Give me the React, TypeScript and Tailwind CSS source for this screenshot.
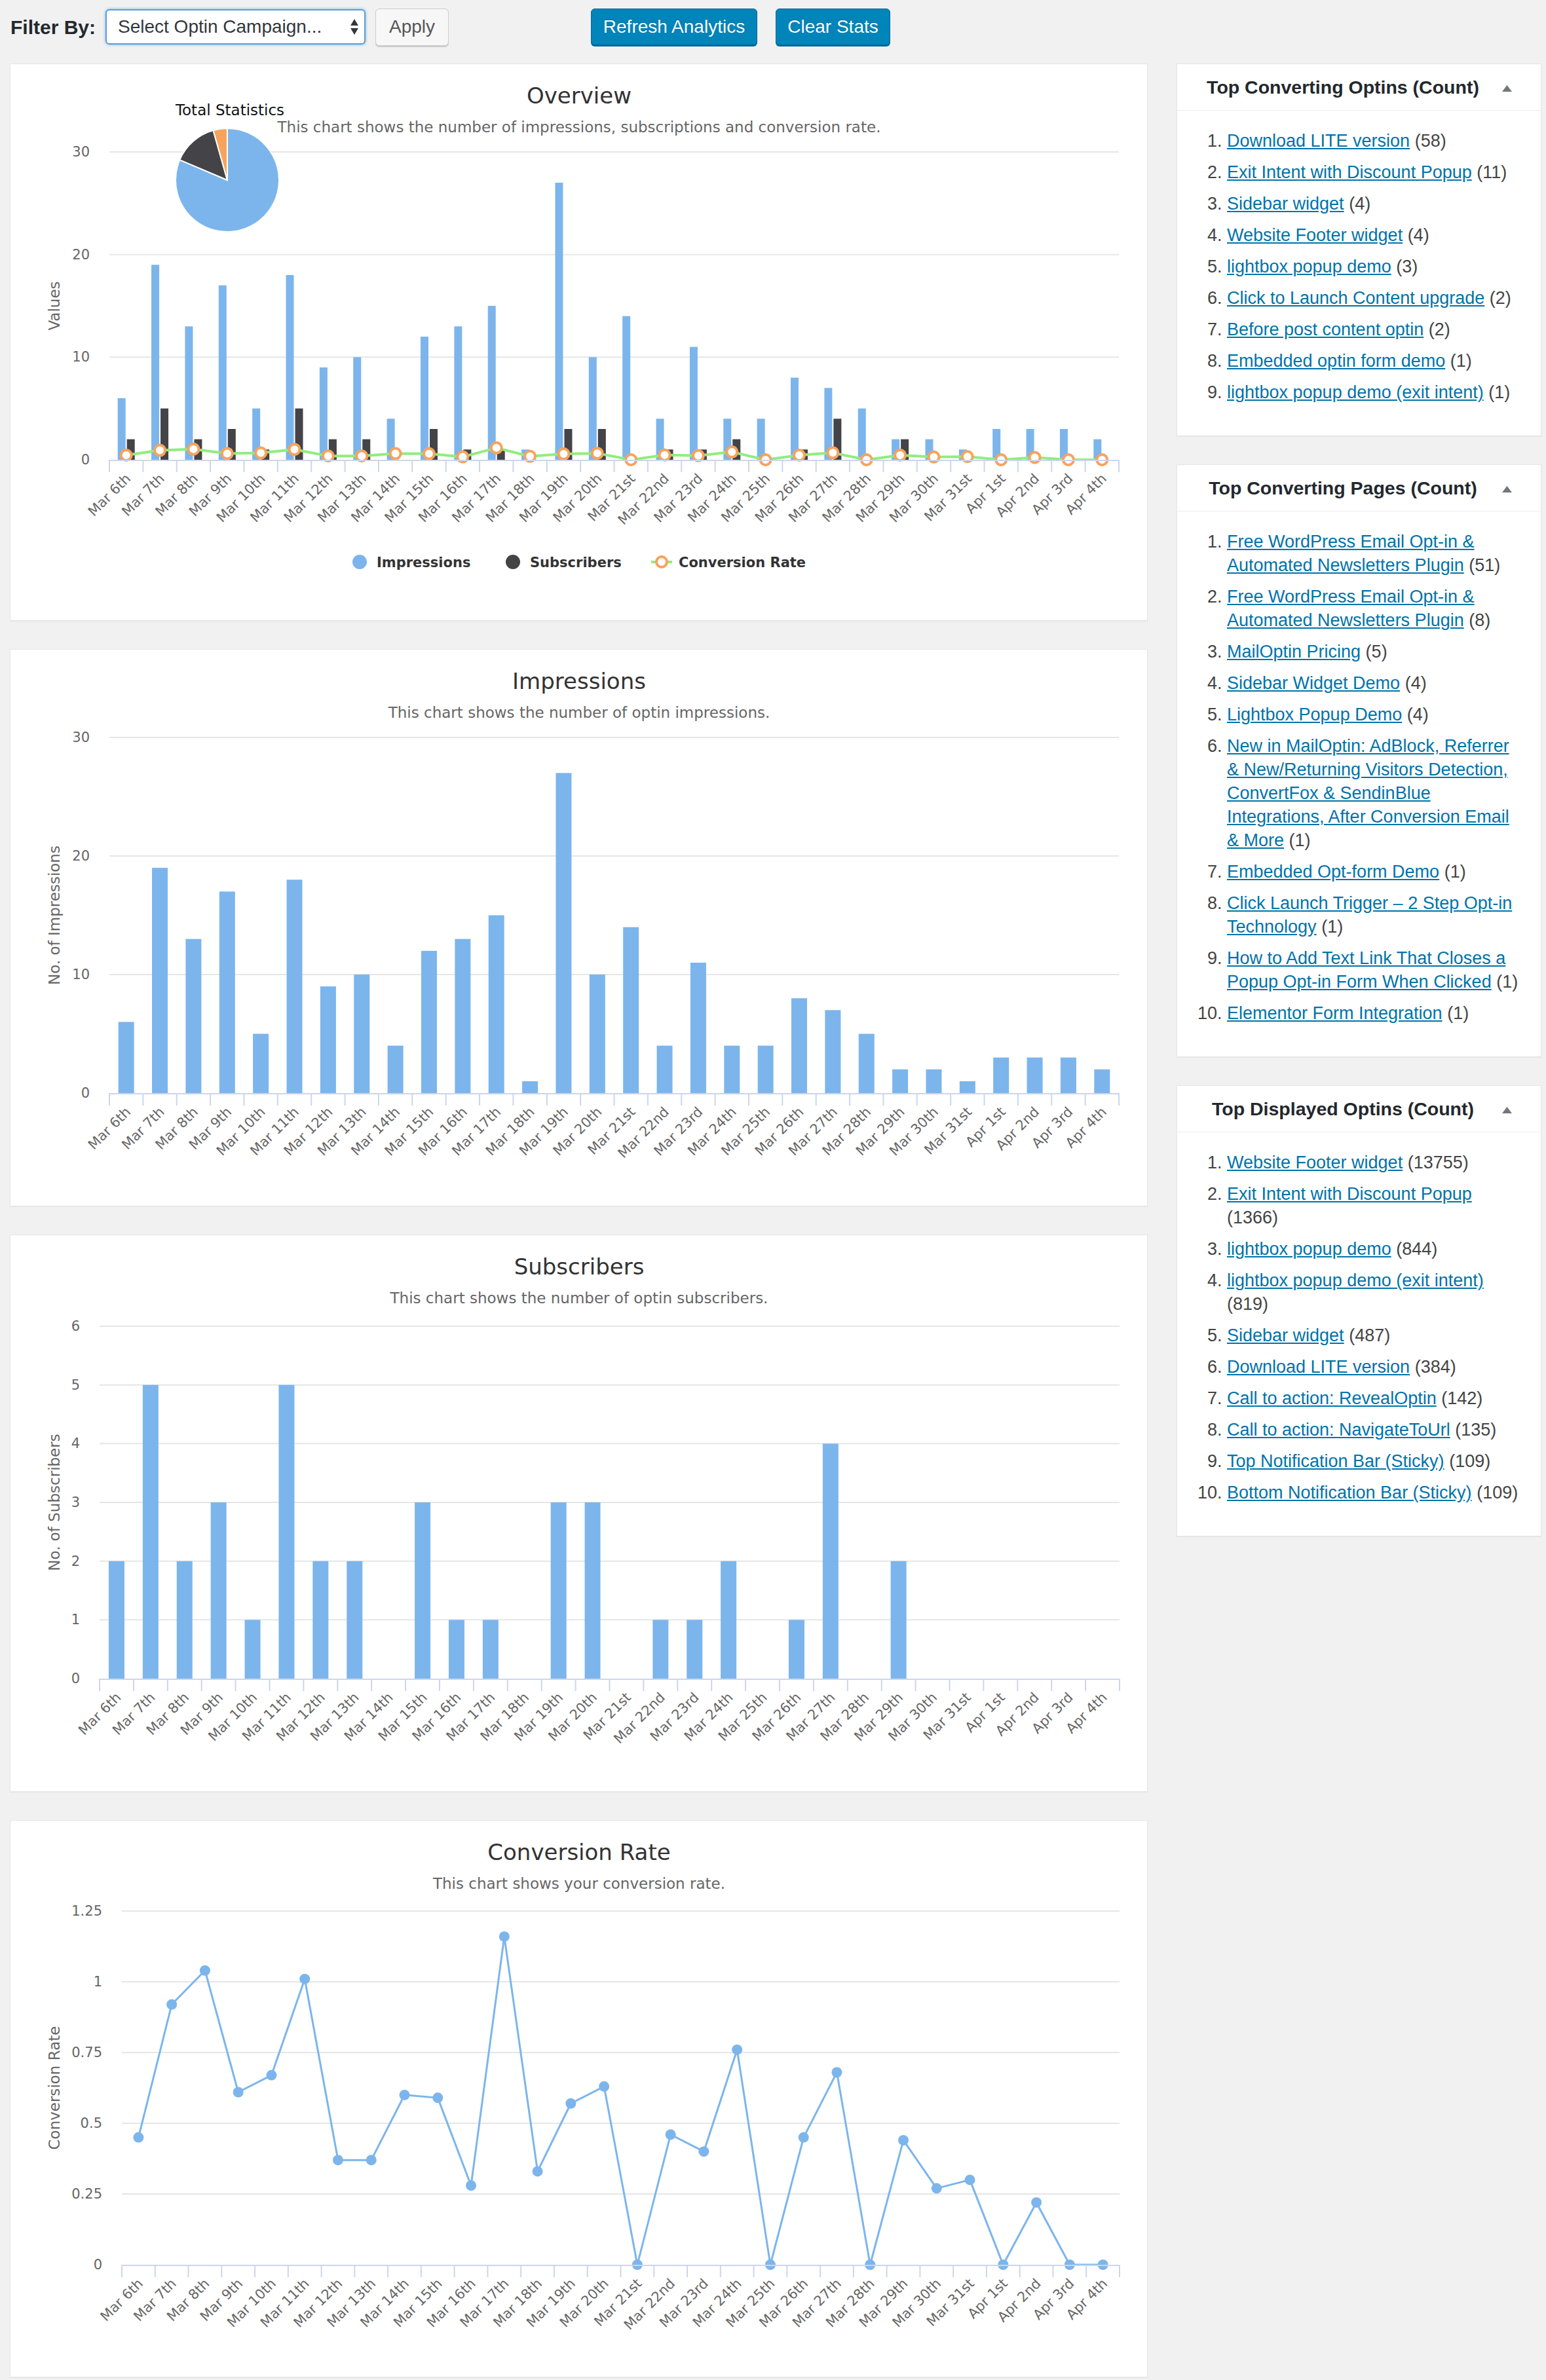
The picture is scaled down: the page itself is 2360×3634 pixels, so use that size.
import React from "react";

const CATS = [
  "Mar 6th", "Mar 7th", "Mar 8th", "Mar 9th", "Mar 10th", "Mar 11th", "Mar 12th", "Mar 13th",
  "Mar 14th", "Mar 15th", "Mar 16th", "Mar 17th", "Mar 18th", "Mar 19th", "Mar 20th", "Mar 21st",
  "Mar 22nd", "Mar 23rd", "Mar 24th", "Mar 25th", "Mar 26th", "Mar 27th", "Mar 28th", "Mar 29th",
  "Mar 30th", "Mar 31st", "Apr 1st", "Apr 2nd", "Apr 3rd", "Apr 4th",
];
const IMPRESSIONS = [6, 19, 13, 17, 5, 18, 9, 10, 4, 12, 13, 15, 1, 27, 10, 14, 4, 11, 4, 4, 8, 7, 5, 2, 2, 1, 3, 3, 3, 2];
const SUBSCRIBERS = [2, 5, 2, 3, 1, 5, 2, 2, 0, 3, 1, 1, 0, 3, 3, 0, 1, 1, 2, 0, 1, 4, 0, 2, 0, 0, 0, 0, 0, 0];
const CONVERSION = [
  0.45, 0.92, 1.04, 0.61, 0.67, 1.01, 0.37, 0.37, 0.6, 0.59, 0.28, 1.16, 0.33, 0.57, 0.63, 0,
  0.46, 0.4, 0.76, 0, 0.45, 0.68, 0, 0.44, 0.27, 0.3, 0, 0.22, 0, 0,
];

const BLUE = "#7cb5ec";
const DARK = "#434348";
const GREEN = "#90ed7d";
const ORANGE = "#f7a35c";

type Plot = {
  x0: number;
  x1: number;
  yTop: number;
  yBase: number;
  max: number;
  ticks: number[];
  fmt: (v: number) => string;
};

const colX = (p: Plot, i: number) => p.x0 + ((p.x1 - p.x0) / CATS.length) * (i + 0.5);
const valY = (p: Plot, v: number) => p.yBase - (v / p.max) * (p.yBase - p.yTop);

function Grid({ p, yTitle }: { p: Plot; yTitle: string }) {
  const mid = (p.yTop + p.yBase) / 2;
  return (
    <g>
      {p.ticks.map((v) => (
        <g key={v}>
          {v > 0 && (
            <line x1={p.x0} x2={p.x1} y1={valY(p, v)} y2={valY(p, v)} stroke="#e6e6e6" strokeWidth={2} />
          )}
          <text x={p.x0 - 30} y={valY(p, v) + 7} textAnchor="end" fontSize={21} fill="#666">
            {p.fmt(v)}
          </text>
        </g>
      ))}
      <text transform={`translate(75 ${mid}) rotate(-90)`} textAnchor="middle" fontSize={23} fill="#666">
        {yTitle}
      </text>
    </g>
  );
}

function XAxis({ p }: { p: Plot }) {
  const step = (p.x1 - p.x0) / CATS.length;
  return (
    <g>
      <line x1={p.x0} x2={p.x1} y1={p.yBase + 1} y2={p.yBase + 1} stroke="#ccd6eb" strokeWidth={2} />
      {Array.from({ length: CATS.length + 1 }).map((_, i) => (
        <line
          key={i}
          x1={p.x0 + i * step}
          x2={p.x0 + i * step}
          y1={p.yBase}
          y2={p.yBase + 19}
          stroke="#ccd6eb"
          strokeWidth={2}
        />
      ))}
      {CATS.map((c, i) => {
        const x = colX(p, i) + 8;
        const y = p.yBase + 30;
        return (
          <text key={c} x={x} y={y} transform={`rotate(-45 ${x} ${y})`} textAnchor="end" fontSize={21} fill="#666">
            {c}
          </text>
        );
      })}
    </g>
  );
}

function ChartPanel({ title, subtitle, children }: { title: string; subtitle: string; children: React.ReactNode }) {
  return (
    <div className="h-[851px] w-[1737px] border border-[#e5e5e5] bg-white shadow-[0_1px_1px_rgba(0,0,0,0.04)]">
      <svg className="block" width={1735} height={849} fontFamily="'DejaVu Sans', sans-serif">
        <text x={868} y={60} textAnchor="middle" fontSize={34} fill="#333">
          {title}
        </text>
        <text x={868} y={104} textAnchor="middle" fontSize={23} fill="#666">
          {subtitle}
        </text>
        {children}
      </svg>
    </div>
  );
}

function slice(cx: number, cy: number, r: number, a0: number, a1: number) {
  const pt = (a: number) => {
    const rad = (a * Math.PI) / 180;
    return `${cx + r * Math.sin(rad)} ${cy - r * Math.cos(rad)}`;
  };
  const large = a1 - a0 > 180 ? 1 : 0;
  return `M ${cx} ${cy} L ${pt(a0)} A ${r} ${r} 0 ${large} 1 ${pt(a1)} Z`;
}

function Overview() {
  const p: Plot = { x0: 151, x1: 1692, yTop: 134, yBase: 604, max: 30, ticks: [0, 10, 20, 30], fmt: (v) => `${v}` };
  const totals = [
    IMPRESSIONS.reduce((a, b) => a + b, 0),
    SUBSCRIBERS.reduce((a, b) => a + b, 0),
    CONVERSION.reduce((a, b) => a + b, 0),
  ];
  const sum = totals[0] + totals[1] + totals[2];
  const colors = [BLUE, DARK, ORANGE];
  let acc = 0;
  const line = CONVERSION.map((v, i) => `${colX(p, i)},${valY(p, v)}`).join(" ");
  return (
    <ChartPanel title="Overview" subtitle="This chart shows the number of impressions, subscriptions and conversion rate.">
      <Grid p={p} yTitle="Values" />
      {IMPRESSIONS.map((v, i) => (
        <rect key={`i${i}`} x={colX(p, i) - 13} y={valY(p, v)} width={12} height={p.yBase - valY(p, v)} fill={BLUE} />
      ))}
      {SUBSCRIBERS.map((v, i) => (
        <rect key={`s${i}`} x={colX(p, i) + 1} y={valY(p, v)} width={12} height={p.yBase - valY(p, v)} fill={DARK} />
      ))}
      <polyline points={line} fill="none" stroke={GREEN} strokeWidth={4} strokeLinejoin="round" />
      {CONVERSION.map((v, i) => (
        <circle key={`c${i}`} cx={colX(p, i)} cy={valY(p, v)} r={8} fill="#fff" stroke={ORANGE} strokeWidth={4} />
      ))}
      <XAxis p={p} />

      {/* pie */}
      <text x={335} y={78} textAnchor="middle" fontSize={23} fill="#111">
        Total Statistics
      </text>
      {totals.map((t, k) => {
        const a0 = (acc / sum) * 360;
        acc += t;
        const a1 = (acc / sum) * 360;
        return <path key={k} d={slice(331, 177, 79, a0, a1)} fill={colors[k]} stroke="#fff" strokeWidth={2} />;
      })}

      {/* legend */}
      <circle cx={533} cy={760} r={11} fill={BLUE} />
      <text x={559} y={768} fontSize={21} fontWeight="bold" fill="#333">
        Impressions
      </text>
      <circle cx={767} cy={760} r={11} fill={DARK} />
      <text x={793} y={768} fontSize={21} fontWeight="bold" fill="#333">
        Subscribers
      </text>
      <line x1={978} x2={1010} y1={760} y2={760} stroke={GREEN} strokeWidth={4} />
      <circle cx={994} cy={760} r={8} fill="#fff" stroke={ORANGE} strokeWidth={4} />
      <text x={1020} y={768} fontSize={21} fontWeight="bold" fill="#333">
        Conversion Rate
      </text>
    </ChartPanel>
  );
}

function BarChart({
  title,
  subtitle,
  yTitle,
  data,
  p,
}: {
  title: string;
  subtitle: string;
  yTitle: string;
  data: number[];
  p: Plot;
}) {
  return (
    <ChartPanel title={title} subtitle={subtitle}>
      <Grid p={p} yTitle={yTitle} />
      {data.map((v, i) => (
        <rect key={i} x={colX(p, i) - 12} y={valY(p, v)} width={24} height={p.yBase - valY(p, v)} fill={BLUE} />
      ))}
      <XAxis p={p} />
    </ChartPanel>
  );
}

function ConversionChart() {
  const p: Plot = {
    x0: 170,
    x1: 1693,
    yTop: 138,
    yBase: 678,
    max: 1.25,
    ticks: [0, 0.25, 0.5, 0.75, 1, 1.25],
    fmt: (v) => `${v}`,
  };
  const line = CONVERSION.map((v, i) => `${colX(p, i)},${valY(p, v)}`).join(" ");
  return (
    <ChartPanel title="Conversion Rate" subtitle="This chart shows your conversion rate.">
      <Grid p={p} yTitle="Conversion Rate" />
      <polyline points={line} fill="none" stroke={BLUE} strokeWidth={3} strokeLinejoin="round" />
      {CONVERSION.map((v, i) => (
        <circle key={i} cx={colX(p, i)} cy={valY(p, v)} r={8} fill={BLUE} />
      ))}
      <XAxis p={p} />
    </ChartPanel>
  );
}

type Item = { label: string; count: string };

function Widget({ title, items }: { title: string; items: Item[] }) {
  return (
    <div className="border border-[#e5e5e5] bg-white shadow-[0_1px_1px_rgba(0,0,0,0.04)]">
      <div className="relative flex h-[71px] items-center border-b border-[#eeeeee]">
        <h2 className="flex-1 pr-[49px] text-center text-[28.5px] font-bold text-[#23282d]">{title}</h2>
        <span className="absolute right-[44px] top-[32px] block">
          <svg width="15" height="10" className="block">
            <path d="M0 10 L7.5 0 L15 10 Z" fill="#72777c" />
          </svg>
        </span>
      </div>
      <ol className="ml-[24px] mr-[29px] list-decimal pb-[36px] pl-[52px] pt-[28px] text-[27px] leading-[36px] text-[#444]">
        {items.map((it, i) => (
          <li key={i} className="mb-[12px]">
            <a href="#" className="text-[#0073aa] underline">
              {it.label}
            </a>{" "}
            ({it.count})
          </li>
        ))}
      </ol>
    </div>
  );
}

const TOP_OPTINS: Item[] = [
  { label: "Download LITE version", count: "58" },
  { label: "Exit Intent with Discount Popup", count: "11" },
  { label: "Sidebar widget", count: "4" },
  { label: "Website Footer widget", count: "4" },
  { label: "lightbox popup demo", count: "3" },
  { label: "Click to Launch Content upgrade", count: "2" },
  { label: "Before post content optin", count: "2" },
  { label: "Embedded optin form demo", count: "1" },
  { label: "lightbox popup demo (exit intent)", count: "1" },
];

const TOP_PAGES: Item[] = [
  { label: "Free WordPress Email Opt-in & Automated Newsletters Plugin", count: "51" },
  { label: "Free WordPress Email Opt-in & Automated Newsletters Plugin", count: "8" },
  { label: "MailOptin Pricing", count: "5" },
  { label: "Sidebar Widget Demo", count: "4" },
  { label: "Lightbox Popup Demo", count: "4" },
  {
    label:
      "New in MailOptin: AdBlock, Referrer & New/Returning Visitors Detection, ConvertFox & SendinBlue Integrations, After Conversion Email & More",
    count: "1",
  },
  { label: "Embedded Opt-form Demo", count: "1" },
  { label: "Click Launch Trigger – 2 Step Opt-in Technology", count: "1" },
  { label: "How to Add Text Link That Closes a Popup Opt-in Form When Clicked", count: "1" },
  { label: "Elementor Form Integration", count: "1" },
];

const TOP_DISPLAYED: Item[] = [
  { label: "Website Footer widget", count: "13755" },
  { label: "Exit Intent with Discount Popup", count: "1366" },
  { label: "lightbox popup demo", count: "844" },
  { label: "lightbox popup demo (exit intent)", count: "819" },
  { label: "Sidebar widget", count: "487" },
  { label: "Download LITE version", count: "384" },
  { label: "Call to action: RevealOptin", count: "142" },
  { label: "Call to action: NavigateToUrl", count: "135" },
  { label: "Top Notification Bar (Sticky)", count: "109" },
  { label: "Bottom Notification Bar (Sticky)", count: "109" },
];

export default function App() {
  return (
    <div className="min-h-[3634px] w-[2360px] bg-[#f1f1f1] font-['Liberation_Sans',Arial,sans-serif] text-[#444]">
      {/* filter bar */}
      <div className="flex h-[97px] items-start pt-[12px]">
        <div className="flex h-[58px] items-center">
          <label className="w-[161px] pl-[16px] text-[30px] font-semibold text-[#23282d]">Filter By:</label>
          <div className="flex h-[54px] w-[397px] items-center justify-between rounded-[6px] border-2 border-[#5b9dd9] bg-white pl-[17px] pr-[8px] text-[28px] text-[#32373c] shadow-[0_0_4px_rgba(30,140,190,0.6)]">
            <span>Select Optin Campaign...</span>
            <svg width="14" height="26" className="block">
              <path d="M1 11 L7 1 L13 11 Z" fill="#32373c" />
              <path d="M1 15 L7 25 L13 15 Z" fill="#32373c" />
            </svg>
          </div>
          <button className="ml-[15px] h-[57px] w-[112px] rounded-[6px] border border-[#cccccc] bg-[#f7f7f7] text-[28px] text-[#555] shadow-[0_2px_0_#cccccc]">
            Apply
          </button>
          <button className="ml-[217px] h-[56px] w-[254px] rounded-[6px] border border-[#006799] bg-[#0085ba] text-[28px] text-white shadow-[0_2px_0_#006799] [text-shadow:0_-1px_1px_#006799]">
            Refresh Analytics
          </button>
          <button className="ml-[28px] h-[56px] w-[175px] rounded-[6px] border border-[#006799] bg-[#0085ba] text-[28px] text-white shadow-[0_2px_0_#006799] [text-shadow:0_-1px_1px_#006799]">
            Clear Stats
          </button>
        </div>
      </div>

      <div className="flex items-start gap-[44px] pl-[15px]">
        <div className="flex w-[1737px] flex-col gap-[43px]">
          <Overview />
          <BarChart
            title="Impressions"
            subtitle="This chart shows the number of optin impressions."
            yTitle="No. of Impressions"
            data={IMPRESSIONS}
            p={{ x0: 151, x1: 1692, yTop: 134, yBase: 677, max: 30, ticks: [0, 10, 20, 30], fmt: (v) => `${v}` }}
          />
          <BarChart
            title="Subscribers"
            subtitle="This chart shows the number of optin subscribers."
            yTitle="No. of Subscribers"
            data={SUBSCRIBERS}
            p={{ x0: 136, x1: 1693, yTop: 139, yBase: 677, max: 6, ticks: [0, 1, 2, 3, 4, 5, 6], fmt: (v) => `${v}` }}
          />
          <ConversionChart />
        </div>

        <div className="flex w-[557px] flex-col gap-[43px]">
          <Widget title="Top Converting Optins (Count)" items={TOP_OPTINS} />
          <Widget title="Top Converting Pages (Count)" items={TOP_PAGES} />
          <Widget title="Top Displayed Optins (Count)" items={TOP_DISPLAYED} />
        </div>
      </div>
    </div>
  );
}
